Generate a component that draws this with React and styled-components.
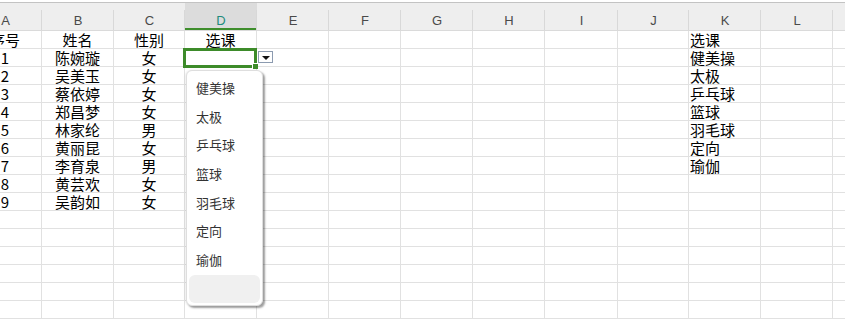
import React from 'react';
import styled, { createGlobalStyle } from 'styled-components';

const GlobalStyle = createGlobalStyle`
  html, body {
    margin: 0;
    padding: 0;
    background: #ffffff;
  }
  body {
    font-family: 'Noto Sans CJK SC', 'Noto Sans', sans-serif;
  }
`;

const widths = [73, 72, 71, 72, 72, 72, 72, 72, 73, 71, 72, 72, 72];
const letters = ['A', 'B', 'C', 'D', 'E', 'F', 'G', 'H', 'I', 'J', 'K', 'L', 'M'];
const cols = widths.map((w) => `${w}px`).join(' ');

const students = [
  ['1', '陈婉璇', '女'],
  ['2', '吴美玉', '女'],
  ['3', '蔡依婷', '女'],
  ['4', '郑昌梦', '女'],
  ['5', '林家纶', '男'],
  ['6', '黄丽昆', '女'],
  ['7', '李育泉', '男'],
  ['8', '黄芸欢', '女'],
  ['9', '吴韵如', '女'],
];
const courses = ['健美操', '太极', '乒乓球', '篮球', '羽毛球', '定向', '瑜伽'];

// build 16 visible rows, 13 columns each
const rows = [];
for (let r = 0; r < 16; r++) {
  const row = new Array(13).fill('');
  if (r === 0) {
    row[0] = '序号';
    row[1] = '姓名';
    row[2] = '性别';
    row[3] = '选课';
    row[10] = '选课';
  } else {
    const s = students[r - 1];
    if (s) {
      row[0] = s[0];
      row[1] = s[1];
      row[2] = s[2];
    }
    if (courses[r - 1]) row[10] = courses[r - 1];
  }
  rows.push(row);
}

const Page = styled.div`
  position: relative;
  width: 845px;
  height: 319px;
  overflow: hidden;
  background: #fff;
`;

const Sheet = styled.div`
  margin-left: -31px;
  padding-top: 2px;
`;

const HeaderRow = styled.div`
  display: grid;
  grid-template-columns: ${cols};
  border-top: 1px solid #c3c3c3;
  border-bottom: 1px solid #dadada;
  background: #eeeeee;
`;

const HeaderCell = styled.div`
  position: relative;
  box-sizing: border-box;
  height: 27px;
  padding-top: 10px;
  line-height: 16px;
  text-align: center;
  font-family: 'Liberation Sans', Arial, sans-serif;
  font-size: 13px;
  color: ${(p) => (p.$active ? '#1e8c7c' : '#4a4a4a')};
  background: ${(p) => (p.$active ? '#dcdcdc' : 'transparent')};
  box-shadow: ${(p) => (p.$active ? 'inset 0 -2px 0 #3e8e2c' : 'none')};
  &::after {
    content: '';
    position: absolute;
    right: 0;
    top: 7px;
    bottom: 0;
    width: 1px;
    background: #d8d8d8;
  }
`;

const Row = styled.div`
  display: grid;
  grid-template-columns: ${cols};
`;

const Cell = styled.div`
  box-sizing: border-box;
  height: 18px;
  border-right: 1px solid #e1e1e1;
  border-bottom: 1px solid #e1e1e1;
  padding: 0 1px;
  line-height: 17px;
  font-size: 15px;
  color: #000;
  white-space: nowrap;
  overflow: visible;
  text-align: ${(p) => p.$align};
`;

const Selection = styled.div`
  position: absolute;
  left: 183px;
  top: 48px;
  width: 74px;
  height: 20px;
  box-sizing: border-box;
  border: 3px solid #3d8b2a;
  &::after {
    content: '';
    position: absolute;
    right: -4px;
    bottom: -4px;
    width: 5px;
    height: 5px;
    background: #3d8b2a;
    border-left: 1px solid #fff;
    border-top: 1px solid #fff;
  }
`;

const DropButton = styled.div`
  position: absolute;
  left: 258px;
  top: 51px;
  width: 15px;
  height: 12px;
  box-sizing: border-box;
  border: 1px solid #8c9bb0;
  background: #fff;
  display: flex;
  align-items: center;
  justify-content: center;
`;

const Arrow = styled.span`
  width: 0;
  height: 0;
  border-left: 4px solid transparent;
  border-right: 4px solid transparent;
  border-top: 4px solid #111;
  margin-top: 1px;
`;

const Popup = styled.div`
  position: absolute;
  left: 186px;
  top: 70px;
  width: 77px;
  box-sizing: border-box;
  padding: 3px 2px 2px 2px;
  background: #fff;
  border: 1px solid #dedede;
  border-radius: 6px;
  box-shadow: 2px 2px 2px rgba(0, 0, 0, 0.38), -1px 0 2px rgba(0, 0, 0, 0.08);
`;

const Option = styled.div`
  height: ${(p) => (p.$hover ? '28px' : '28.7px')};
  line-height: 27px;
  padding-left: 7px;
  font-size: 13px;
  color: #333;
  border-radius: 6px;
  background: ${(p) => (p.$hover ? '#f0f0f0' : 'transparent')};
`;

export default function App() {
  return (
    <Page>
      <GlobalStyle />
      <Sheet>
        <HeaderRow>
          {letters.map((l) => (
            <HeaderCell key={l} $active={l === 'D'}>
              {l}
            </HeaderCell>
          ))}
        </HeaderRow>
        {rows.map((row, r) => (
          <Row key={r}>
            {row.map((v, c) => (
              <Cell key={c} $align={c === 10 ? 'left' : 'center'}>
                {v}
              </Cell>
            ))}
          </Row>
        ))}
      </Sheet>
      <Selection />
      <DropButton>
        <Arrow />
      </DropButton>
      <Popup>
        {courses.map((c) => (
          <Option key={c}>{c}</Option>
        ))}
        <Option $hover />
      </Popup>
    </Page>
  );
}
